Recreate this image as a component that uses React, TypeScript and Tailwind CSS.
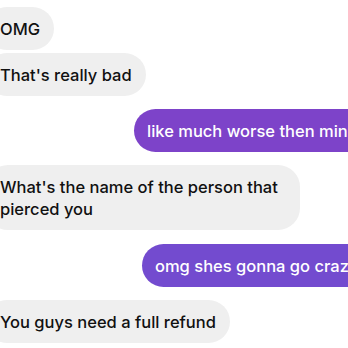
import React from 'react';

const messages = [
    { id: 1, mine: false, text: 'OMG' },
    { id: 2, mine: false, text: "That's really bad" },
    { id: 3, mine: true, text: 'like much worse then mine', offset: 'ml-[148px]', color: 'bg-[#7d43c9]' },
    { id: 4, mine: false, text: "What's the name of the person that pierced you", wide: true },
    { id: 5, mine: true, text: 'omg shes gonna go crazy', offset: 'ml-[156px]', color: 'bg-[#734bcf]' },
    { id: 6, mine: false, text: 'You guys need a full refund' },
];

const gaps: Record<number, string> = {
    1: 'mt-0',
    2: 'mt-[3px]',
    3: 'mt-[13px]',
    4: 'mt-[13px]',
    5: 'mt-[14px]',
    6: 'mt-[13px]',
};

const App = () => {
    return (
        <div
            className="w-[348px] h-[348px] overflow-hidden bg-white"
            style={{ fontFamily: 'Inter, "Noto Sans", sans-serif' }}
        >
            <div className="ml-[-14px] pt-[7px] flex flex-col w-[600px]">
                {messages.map((m) =>
                    m.mine ? (
                        <div
                            key={m.id}
                            className={`${gaps[m.id]} ${m.offset} ${m.color} self-start rounded-[22px] px-[13px] pt-[11px] pb-[10px] text-[16.5px] font-medium leading-[22px] text-white whitespace-nowrap`}
                        >
                            {m.text}
                        </div>
                    ) : (
                        <div
                            key={m.id}
                            className={`${gaps[m.id]} self-start rounded-[22px] bg-[#efefef] px-[14px] pt-[11px] pb-[10px] text-[16.5px] font-medium leading-[22px] text-[#111] ${m.wide ? 'w-[314px]' : 'whitespace-nowrap'}`}
                        >
                            {m.text}
                        </div>
                    )
                )}
            </div>
        </div>
    );
};

export default App;
